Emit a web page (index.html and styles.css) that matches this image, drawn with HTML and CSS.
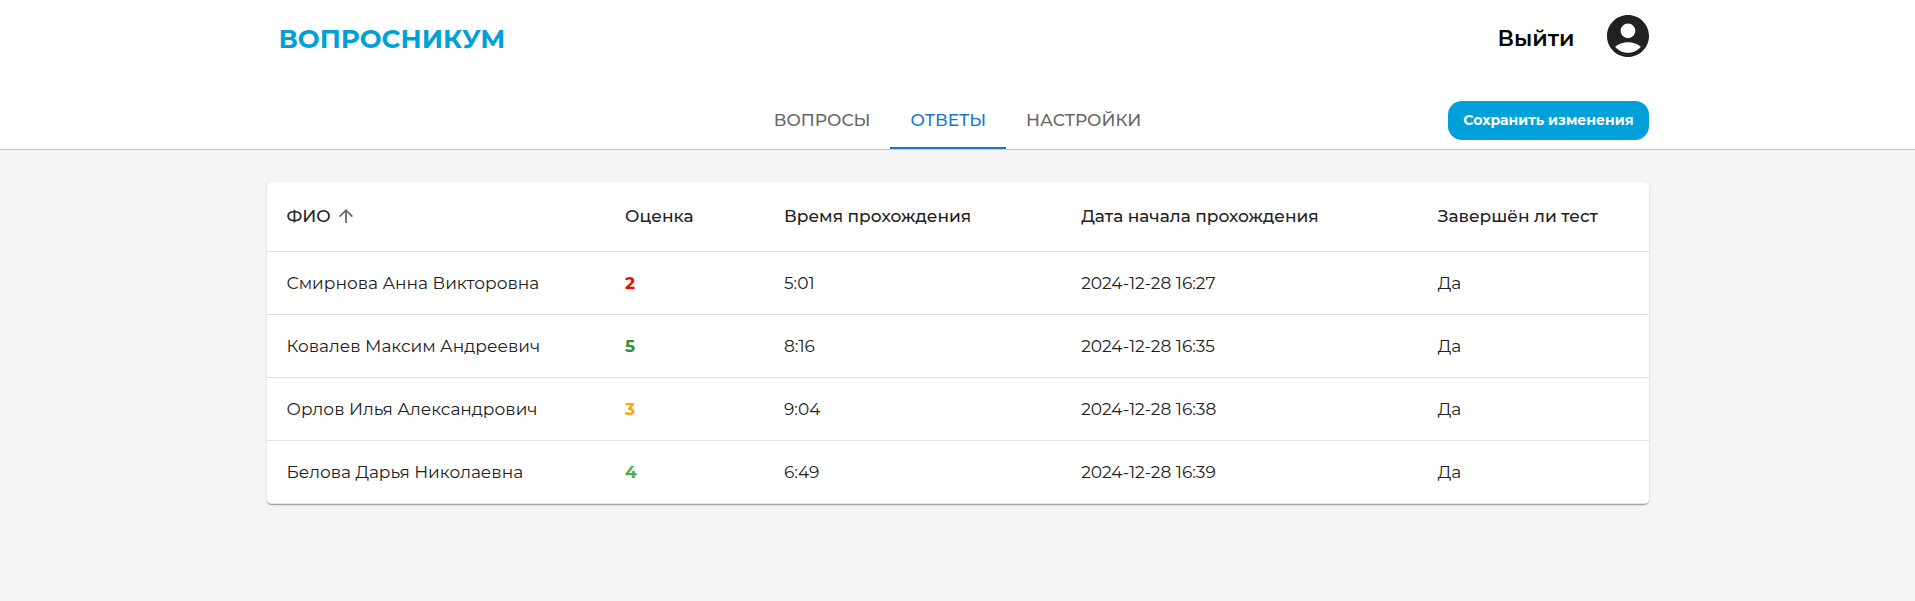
FILE: index.html
```html
<!DOCTYPE html>
<html lang="ru">
<head>
<meta charset="utf-8">
<meta name="viewport" content="width=device-width, initial-scale=1">
<title>Вопросникум</title>
<link rel="stylesheet" href="styles.css">
</head>
<body>
<header class="header">
  <div class="container topbar">
    <a class="logo" href="#">ВОПРОСНИКУМ</a>
    <div class="account">
      <button class="logout" type="button">Выйти</button>
      <a class="profile" href="#" aria-label="Профиль">
        <svg class="profile-icon" viewBox="2 2 20 20" aria-hidden="true"><path d="M12 2C6.48 2 2 6.48 2 12s4.48 10 10 10 10-4.48 10-10S17.52 2 12 2zm0 4c1.93 0 3.5 1.57 3.5 3.5S13.93 13 12 13s-3.5-1.57-3.5-3.5S10.07 6 12 6zm0 14c-2.03 0-4.43-.82-6.14-2.88C7.55 15.8 9.68 15 12 15s4.45.8 6.14 2.12C16.43 19.18 14.03 20 12 20z"/></svg>
      </a>
    </div>
  </div>
  <div class="container navbar">
    <nav class="tabs">
      <button class="tab" type="button">ВОПРОСЫ</button>
      <button class="tab tab-active" type="button">ОТВЕТЫ</button>
      <button class="tab" type="button">НАСТРОЙКИ</button>
    </nav>
    <button class="save" type="button">Сохранить изменения</button>
  </div>
</header>
<main class="container main">
  <div class="card">
    <table class="table">
      <colgroup><col class="col-name"><col class="col-grade"><col class="col-time"><col class="col-date"><col class="col-done"></colgroup>
      <thead>
        <tr>
          <th scope="col" aria-sort="ascending"><button class="sort" type="button">ФИО <svg class="sort-icon" viewBox="4 4 16 16" aria-hidden="true"><path d="M4 12l1.41 1.41L11 7.83V20h2V7.83l5.58 5.59L20 12l-8-8-8 8z"/></svg></button></th>
          <th scope="col">Оценка</th>
          <th scope="col">Время прохождения</th>
          <th scope="col">Дата начала прохождения</th>
          <th scope="col">Завершён ли тест</th>
        </tr>
      </thead>
      <tbody>
        <tr><td>Смирнова Анна Викторовна</td><td class="grade grade-2">2</td><td>5:01</td><td>2024-12-28 16:27</td><td>Да</td></tr>
        <tr><td>Ковалев Максим Андреевич</td><td class="grade grade-5">5</td><td>8:16</td><td>2024-12-28 16:35</td><td>Да</td></tr>
        <tr><td>Орлов Илья Александрович</td><td class="grade grade-3">3</td><td>9:04</td><td>2024-12-28 16:38</td><td>Да</td></tr>
        <tr><td>Белова Дарья Николаевна</td><td class="grade grade-4">4</td><td>6:49</td><td>2024-12-28 16:39</td><td>Да</td></tr>
      </tbody>
    </table>
  </div>
</main>
</body>
</html>
```
FILE: styles.css
```css
* { box-sizing: border-box; }

body {
  margin: 0;
  background: #f5f5f5;
  color: #212121;
  font-family: Montserrat, Inter, "Open Sans", sans-serif;
  font-size: 17px;
}

button {
  padding: 0;
  border: 0;
  background: none;
  color: inherit;
  font: inherit;
  cursor: pointer;
}

a { color: inherit; text-decoration: none; }

.container {
  width: 100%;
  max-width: 1382px;
  margin: 0 auto;
}

.header {
  background: #fff;
  border-bottom: 1px solid #c8c8c8;
}

.topbar {
  display: flex;
  align-items: center;
  justify-content: space-between;
  padding: 15px 0 0 12px;
}

.logo,
.logout {
  padding-top: 6px;
  line-height: 36px;
}

.logo {
  color: #00a1d8;
  font-size: 26px;
  font-weight: 700;
}

.account {
  display: flex;
  align-items: center;
  gap: 32px;
}

.logout {
  color: #000;
  font-size: 22px;
  font-weight: 600;
}

.profile { display: flex; }

.profile-icon {
  width: 42px;
  height: 42px;
  fill: #212121;
}

.navbar {
  display: grid;
  grid-template-columns: 1fr auto 1fr;
  align-items: end;
  padding-top: 37px;
}

.tabs {
  display: flex;
  grid-column: 2;
}

.tab {
  padding: 0 20px;
  border-bottom: 2px solid transparent;
  color: #666;
  font-weight: 500;
  line-height: 53px;
}

.tab-active {
  border-color: #1976d2;
  color: #1976d2;
}

.save {
  justify-self: end;
  margin-bottom: 9px;
  padding: 0 15px;
  border-radius: 14px;
  background: #00a1d8;
  color: #fff;
  font-size: 14px;
  font-weight: 700;
  line-height: 39px;
}

.main { padding: 32px 0; }

.card {
  overflow: hidden;
  border-radius: 5px;
  background: #fff;
  box-shadow: 0 2px 1px -1px rgba(0, 0, 0, 0.2), 0 1px 1px rgba(0, 0, 0, 0.14), 0 1px 3px rgba(0, 0, 0, 0.12);
}

.table {
  width: 100%;
  border-collapse: separate;
  border-spacing: 0;
  table-layout: fixed;
}

.col-name { width: 24.5%; }
.col-grade { width: 11.5%; }
.col-time { width: 21.5%; }
.col-date { width: 25.8%; }
.col-done { width: 16.7%; }

.table th,
.table td {
  height: 63px;
  padding: 0 19px 0 20px;
  border-bottom: 1px solid #e0e0e0;
  text-align: left;
}

.table th {
  height: 70px;
  padding-bottom: 2px;
  font-weight: 500;
}

.table td { font-weight: 400; }

.sort {
  display: flex;
  align-items: center;
  gap: 8px;
}

.sort-icon {
  width: 14px;
  height: 14px;
  fill: #666;
}

.table .grade { font-weight: 700; }
.grade-2 { color: #f00; }
.grade-3 { color: #ffa500; }
.grade-4 { color: #4caf50; }
.grade-5 { color: #388e3c; }
```
